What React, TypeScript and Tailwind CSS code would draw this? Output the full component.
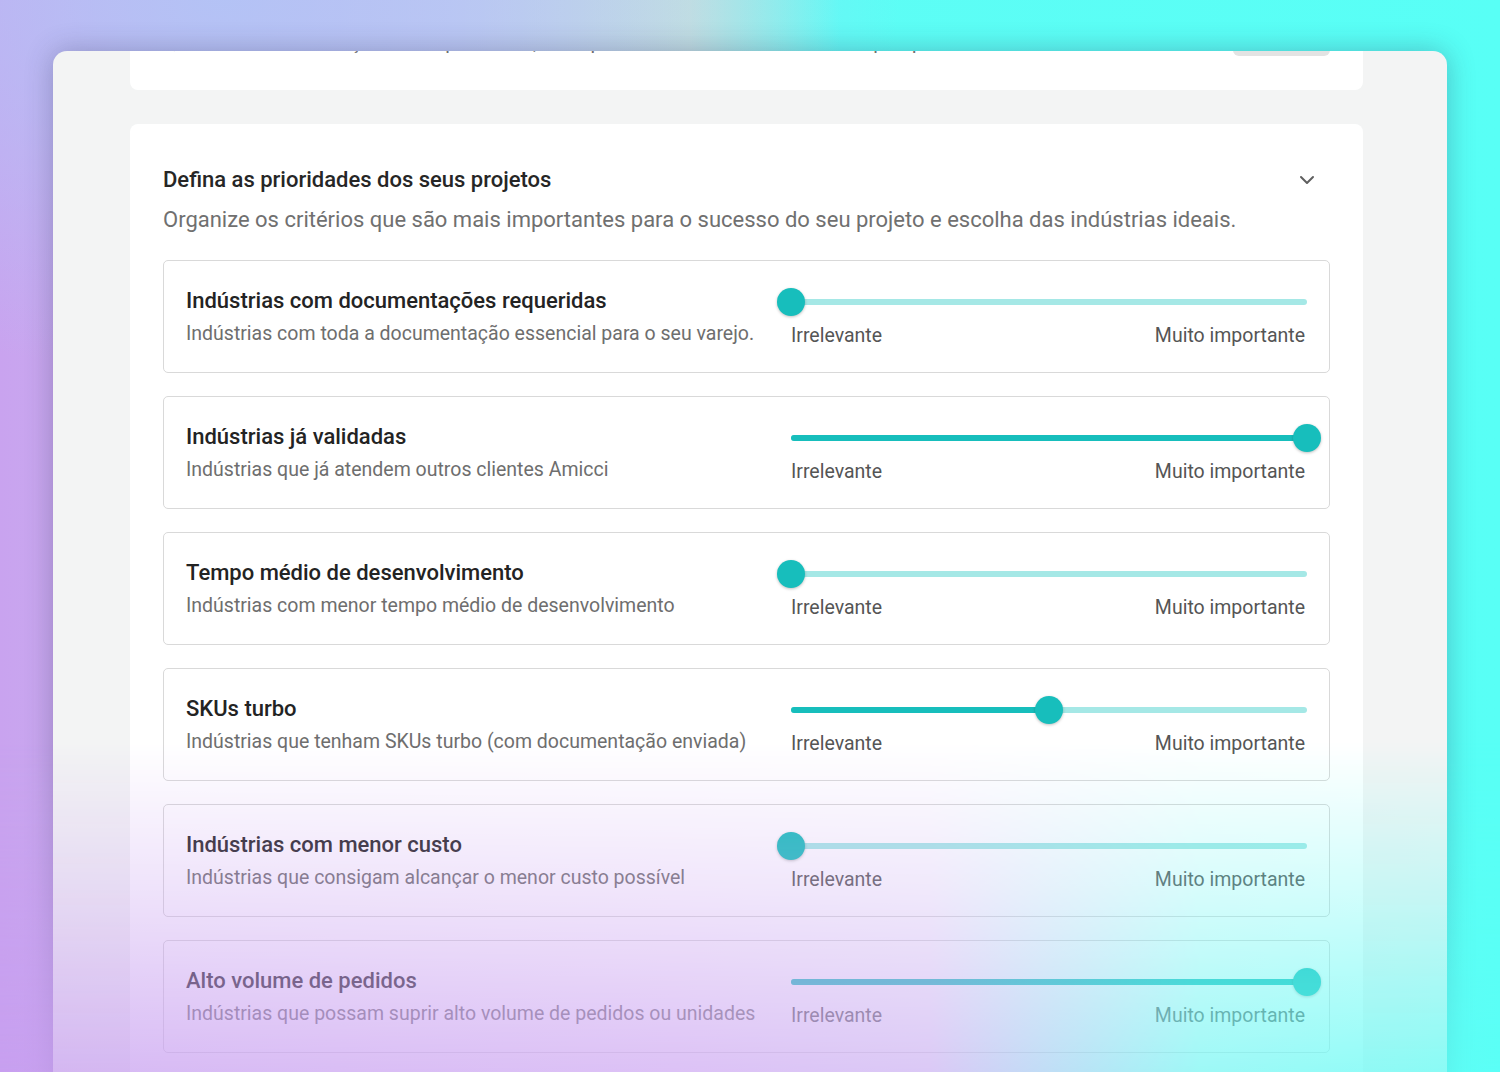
import React from "react";
import { ChevronDown } from "lucide-react";

type Item = { title: string; desc: string; value: number };

const items: Item[] = [
  { title: "Indústrias com documentações requeridas", desc: "Indústrias com toda a documentação essencial para o seu varejo.", value: 0 },
  { title: "Indústrias já validadas", desc: "Indústrias que já atendem outros clientes Amicci", value: 100 },
  { title: "Tempo médio de desenvolvimento", desc: "Indústrias com menor tempo médio de desenvolvimento", value: 0 },
  { title: "SKUs turbo", desc: "Indústrias que tenham SKUs turbo (com documentação enviada)", value: 50 },
  { title: "Indústrias com menor custo", desc: "Indústrias que consigam alcançar o menor custo possível", value: 0 },
  { title: "Alto volume de pedidos", desc: "Indústrias que possam suprir alto volume de pedidos ou unidades", value: 100 },
];

function Slider({ value }: { value: number }) {
  return (
    <div className="w-[544px] shrink-0 pt-[27px]">
      <div className="relative h-[28px] px-[14px]">
        <div className="relative h-full">
          <div className="absolute left-0 right-0 top-[11px] h-[6px] rounded-full bg-[#a5e8e6]" />
          <div
            className="absolute left-0 top-[11px] h-[6px] rounded-full bg-[#17bebc]"
            style={{ width: `${value}%` }}
          />
          <div
            className="absolute top-0 h-[28px] w-[28px] -translate-x-1/2 rounded-full bg-[#17bebc] shadow-[0_1px_3px_rgba(0,0,0,0.25)]"
            style={{ left: `${value}%` }}
          />
        </div>
      </div>
      <div className="mt-[8px] flex justify-between pl-[14px] pr-[16px] text-[19.5px] leading-[24px] text-[#555555]">
        <span>Irrelevante</span>
        <span>Muito importante</span>
      </div>
    </div>
  );
}

function Row({ item }: { item: Item }) {
  return (
    <div className="flex h-[113px] items-start rounded-[5px] border border-[#d9d9d9] bg-white pl-[22px] pr-[8px]">
      <div className="min-w-0 flex-1 pt-[26px]">
        <div className="text-[22px] font-medium leading-[28px] text-[#232323]">{item.title}</div>
        <div className="mt-[7px] text-[19.5px] leading-[24px] text-[#6e6e6e]">{item.desc}</div>
      </div>
      <Slider value={item.value} />
    </div>
  );
}

export default function App() {
  return (
    <div
      className="relative h-[1072px] w-full overflow-hidden bg-[linear-gradient(90deg,#c9a3ef_0%,#c3c9f0_30%,#c5e6dc_46%,#5dfdf5_56%,#58fff6_100%)]"
      style={{ fontFamily: "Roboto, 'Noto Sans', sans-serif" }}
    >
      <div className="pointer-events-none absolute inset-0 bg-[radial-gradient(ellipse_45%_35%_at_15%_0%,rgba(178,196,246,0.9),transparent)]" />

      <div className="relative ml-[53px] mr-[53px] mt-[51px] h-[1100px] overflow-hidden rounded-t-[14px] bg-[#f3f4f4] pl-[77px] pr-[84px] shadow-[0_0_28px_rgba(40,40,80,0.3)]">
        {/* clipped top card */}
        <div className="-mt-[60px] flex h-[99px] items-start justify-between rounded-b-[8px] bg-white pl-[33px] pr-[33px]">
          <div className="pt-[37px] text-[20px] leading-[28px] text-[#6e6e6e]">
            Quanto mais informações você preencher, mais preciso será o resultado da sua pesquisa
          </div>
          <div className="mt-[25px] h-[40px] w-[97px] rounded-[6px] bg-[#e3e3e3]" />
        </div>

        {/* main card */}
        <div className="mt-[34px] rounded-[8px] bg-white px-[33px] pb-[40px] pt-[42px]">
          <div className="flex items-center justify-between pr-[11px]">
            <h2 className="text-[22px] font-medium leading-[28px] text-[#262626]">
              Defina as prioridades dos seus projetos
            </h2>
            <ChevronDown size={24} strokeWidth={2} className="text-[#5f5f5f]" />
          </div>
          <p className="mt-[12px] text-[22px] leading-[28px] text-[#707070]">
            Organize os critérios que são mais importantes para o sucesso do seu projeto e escolha das indústrias ideais.
          </p>
          <div className="mt-[26px] flex flex-col gap-[23px]">
            {items.map((it) => (
              <Row key={it.title} item={it} />
            ))}
          </div>
        </div>
      </div>

      {/* bottom glow overlay */}
      <div className="pointer-events-none absolute bottom-0 left-0 right-0 h-[330px] bg-[linear-gradient(90deg,#c79ef0_0%,#cfaaf2_45%,#cdb4f2_62%,#78f6f3_80%,#5cfff6_100%)] [mask-image:linear-gradient(180deg,transparent_0%,rgba(0,0,0,0.3)_45%,rgba(0,0,0,0.72)_100%)]" />
    </div>
  );
}
